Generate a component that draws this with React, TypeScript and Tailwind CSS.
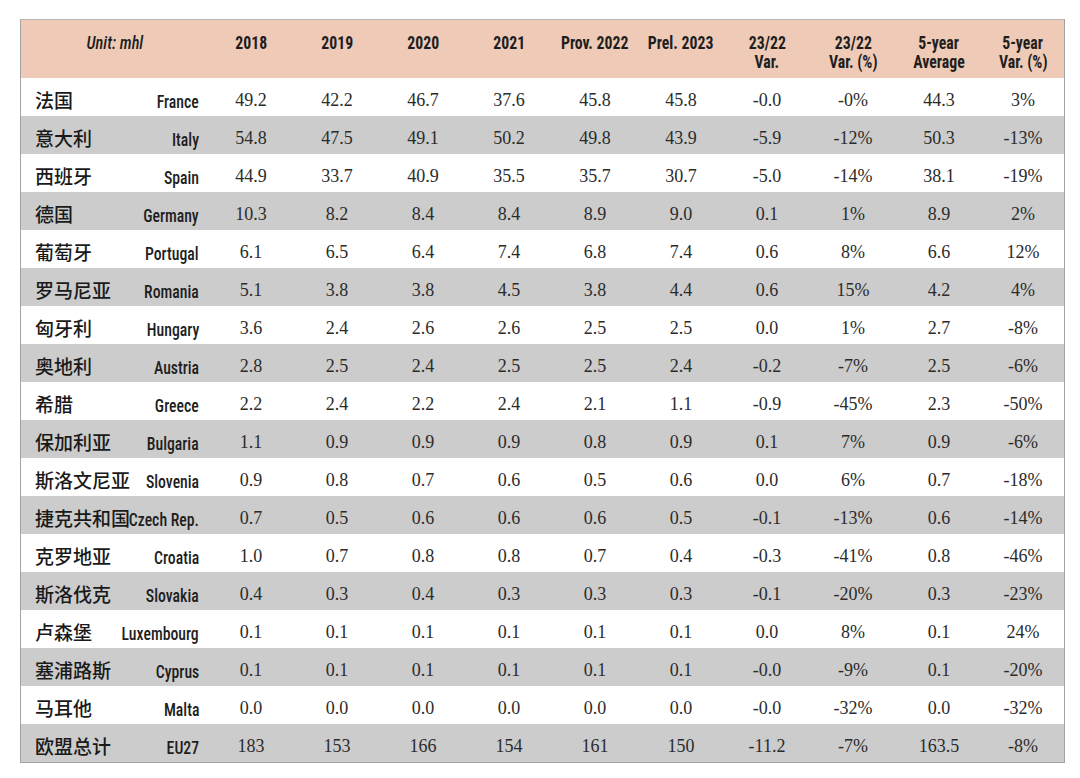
const header: string[][] = [
  ["2018"],
  ["2019"],
  ["2020"],
  ["2021"],
  ["Prov. 2022"],
  ["Prel. 2023"],
  ["23/22", "Var."],
  ["23/22", "Var. (%)"],
  ["5-year", "Average"],
  ["5-year", "Var. (%)"],
];

const rows: string[][] = [
  ["法国", "France", "49.2", "42.2", "46.7", "37.6", "45.8", "45.8", "-0.0", "-0%", "44.3", "3%"],
  ["意大利", "Italy", "54.8", "47.5", "49.1", "50.2", "49.8", "43.9", "-5.9", "-12%", "50.3", "-13%"],
  ["西班牙", "Spain", "44.9", "33.7", "40.9", "35.5", "35.7", "30.7", "-5.0", "-14%", "38.1", "-19%"],
  ["德国", "Germany", "10.3", "8.2", "8.4", "8.4", "8.9", "9.0", "0.1", "1%", "8.9", "2%"],
  ["葡萄牙", "Portugal", "6.1", "6.5", "6.4", "7.4", "6.8", "7.4", "0.6", "8%", "6.6", "12%"],
  ["罗马尼亚", "Romania", "5.1", "3.8", "3.8", "4.5", "3.8", "4.4", "0.6", "15%", "4.2", "4%"],
  ["匈牙利", "Hungary", "3.6", "2.4", "2.6", "2.6", "2.5", "2.5", "0.0", "1%", "2.7", "-8%"],
  ["奥地利", "Austria", "2.8", "2.5", "2.4", "2.5", "2.5", "2.4", "-0.2", "-7%", "2.5", "-6%"],
  ["希腊", "Greece", "2.2", "2.4", "2.2", "2.4", "2.1", "1.1", "-0.9", "-45%", "2.3", "-50%"],
  ["保加利亚", "Bulgaria", "1.1", "0.9", "0.9", "0.9", "0.8", "0.9", "0.1", "7%", "0.9", "-6%"],
  ["斯洛文尼亚", "Slovenia", "0.9", "0.8", "0.7", "0.6", "0.5", "0.6", "0.0", "6%", "0.7", "-18%"],
  ["捷克共和国", "Czech Rep.", "0.7", "0.5", "0.6", "0.6", "0.6", "0.5", "-0.1", "-13%", "0.6", "-14%"],
  ["克罗地亚", "Croatia", "1.0", "0.7", "0.8", "0.8", "0.7", "0.4", "-0.3", "-41%", "0.8", "-46%"],
  ["斯洛伐克", "Slovakia", "0.4", "0.3", "0.4", "0.3", "0.3", "0.3", "-0.1", "-20%", "0.3", "-23%"],
  ["卢森堡", "Luxembourg", "0.1", "0.1", "0.1", "0.1", "0.1", "0.1", "0.0", "8%", "0.1", "24%"],
  ["塞浦路斯", "Cyprus", "0.1", "0.1", "0.1", "0.1", "0.1", "0.1", "-0.0", "-9%", "0.1", "-20%"],
  ["马耳他", "Malta", "0.0", "0.0", "0.0", "0.0", "0.0", "0.0", "-0.0", "-32%", "0.0", "-32%"],
  ["欧盟总计", "EU27", "183", "153", "166", "154", "161", "150", "-11.2", "-7%", "163.5", "-8%"],
];

const gridCols = "grid grid-cols-[187px_repeat(9,86px)_82px]";

export default function App() {
  return (
    <div className="w-[1080px] h-[778px] bg-white pl-[20px] pt-[19px]">
      <div className="w-[1045px] border border-[#a3a3a3] border-t-[#b5b5b5] bg-white">
        <div
          className={`${gridCols} h-[58px] bg-[#efcab6] text-[#1e1e1e] font-['Roboto_Condensed',Roboto,sans-serif] text-[19px] leading-[19px] font-bold`}
        >
          <div className="flex justify-center pt-[13px]">
            <span className="inline-block italic font-medium scale-x-[0.86] whitespace-nowrap">Unit: mhl</span>
          </div>
          {header.map((h, i) => (
            <div key={i} className="flex flex-col items-center pt-[13px] text-center">
              {h.map((l, j) => (
                <span key={j} className="inline-block scale-x-[0.83] whitespace-nowrap">
                  {l}
                </span>
              ))}
            </div>
          ))}
        </div>
        {rows.map((r, i) => (
          <div
            key={i}
            className={`${gridCols} h-[38px] ${i % 2 === 1 ? "bg-[#cccccc]" : "bg-white"}`}
          >
            <div className="flex items-center pl-[14px] pr-[9px] pt-[6px] whitespace-nowrap">
              <span className="shrink-0 font-['Noto_Sans_CJK_SC',sans-serif] text-[19px] leading-[22px] font-medium text-[#1a1a1a]">
                {r[0]}
              </span>
              <div className="flex-1 min-w-0 flex justify-end">
                <span className="inline-block shrink-0 origin-right scale-x-[0.9] font-['Roboto_Condensed',Roboto,sans-serif] text-[17.5px] leading-[22px] font-medium text-[#1e1e1e] pt-[3px]">
                  {r[1]}
                </span>
              </div>
            </div>
            {r.slice(2).map((v, j) => (
              <div
                key={j}
                className="flex items-center justify-center pt-[6px] font-['Liberation_Serif',serif] text-[18px] leading-[22px] text-[#2b2b2b]"
              >
                {v}
              </div>
            ))}
          </div>
        ))}
      </div>
    </div>
  );
}
